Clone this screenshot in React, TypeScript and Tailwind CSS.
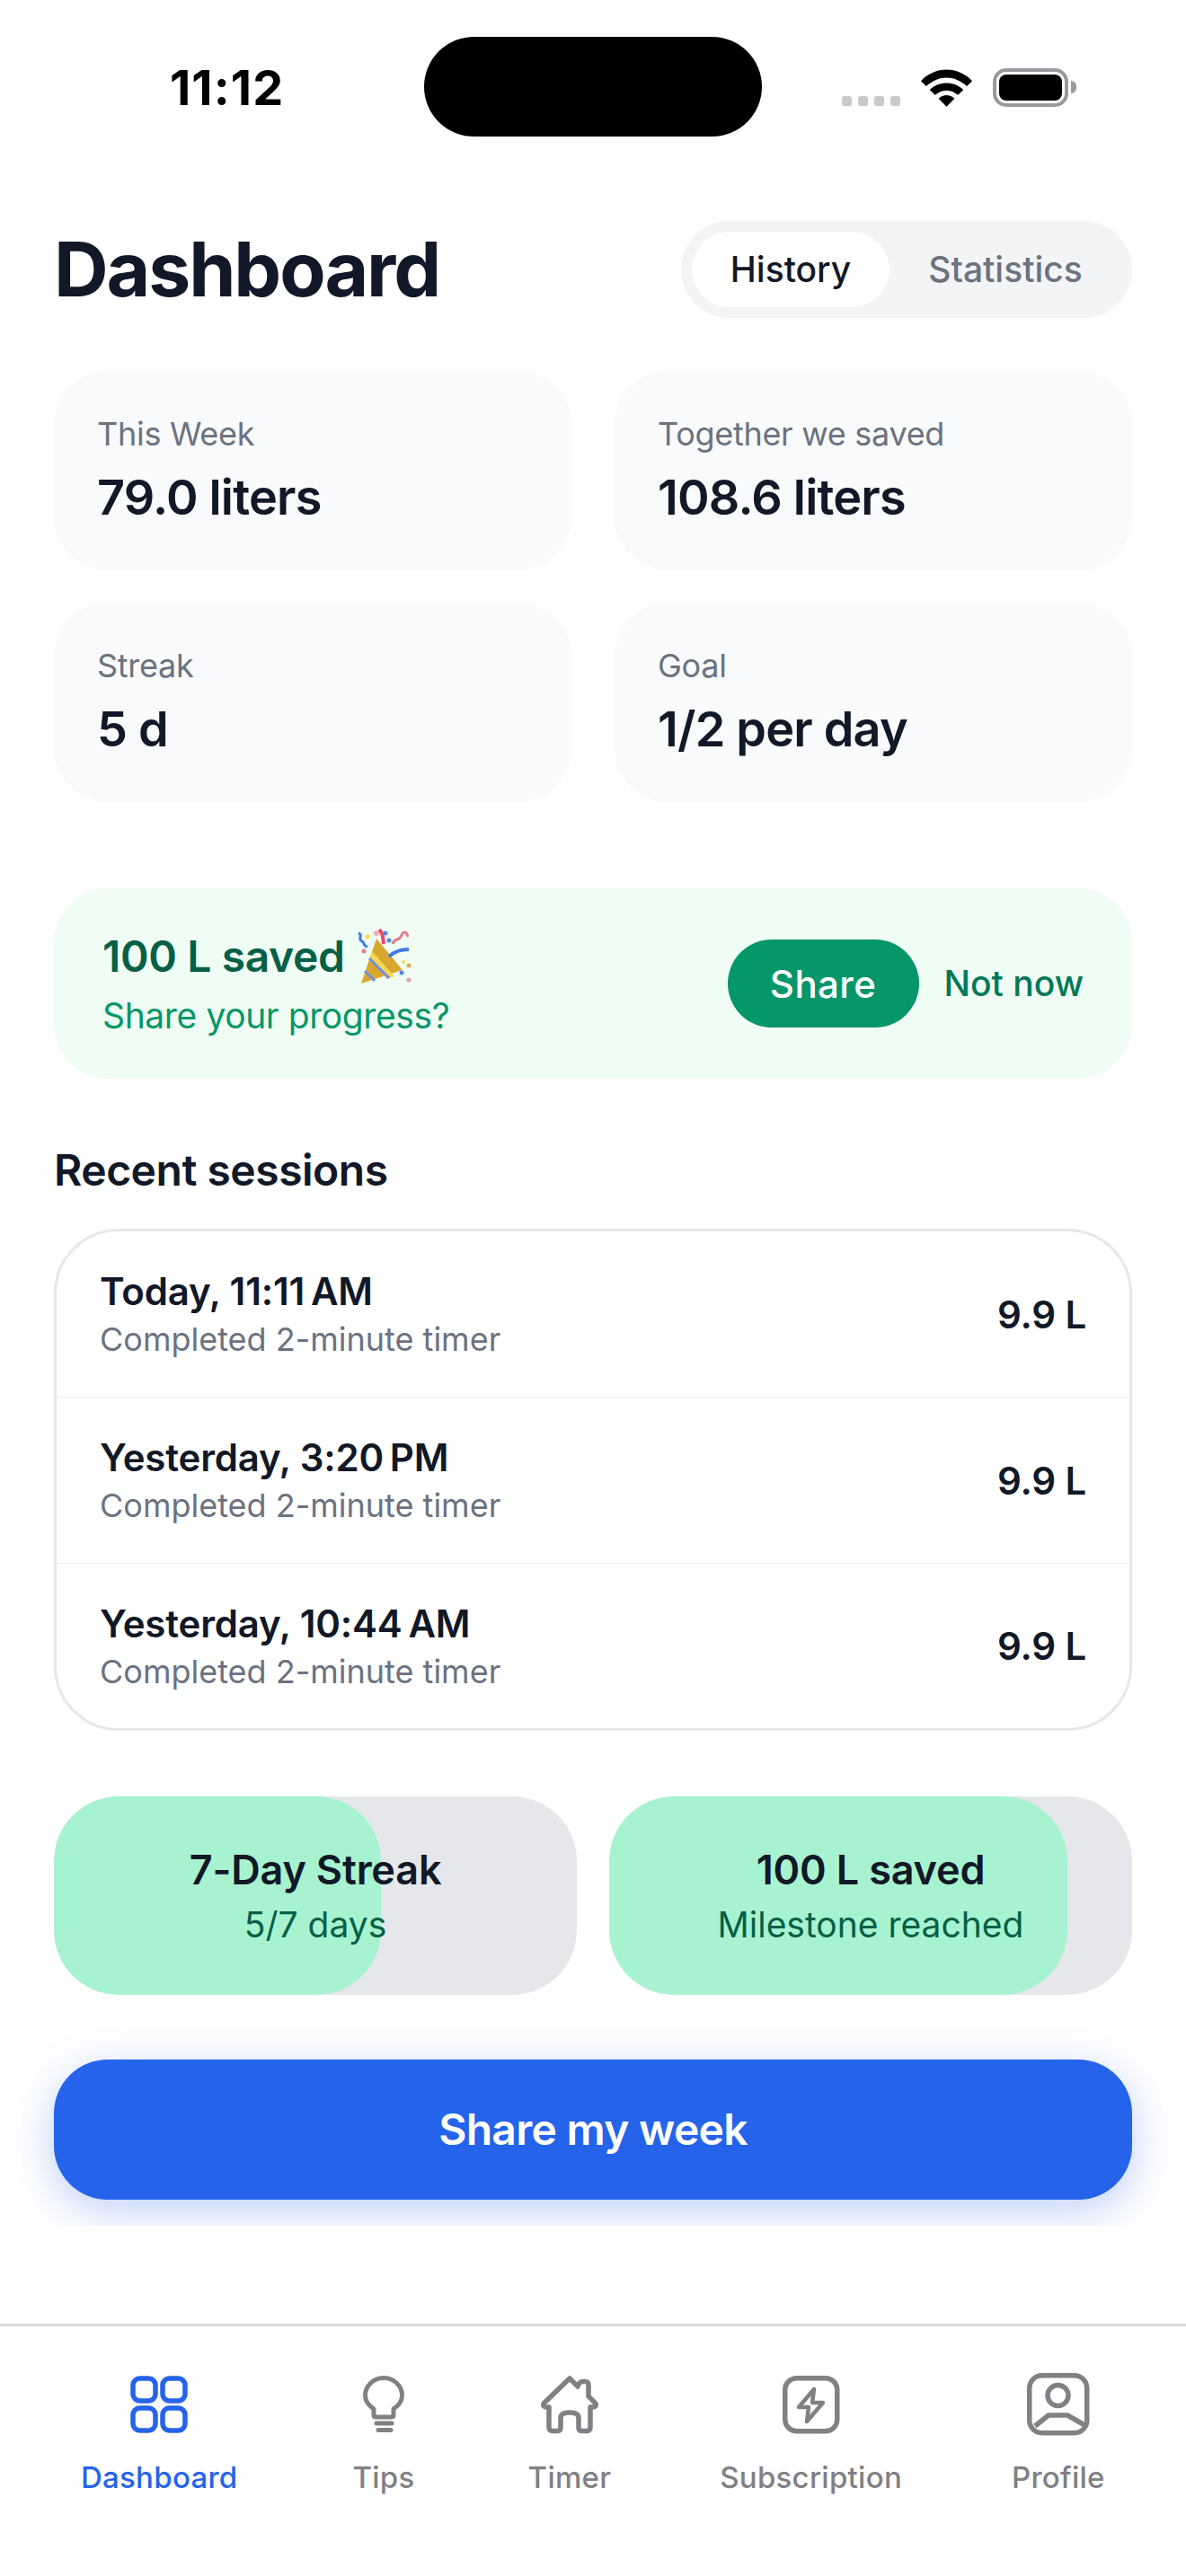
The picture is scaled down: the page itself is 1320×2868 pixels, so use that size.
const PartyPopper = () => (
  <svg width="64" height="64" viewBox="0 0 64 64" className="shrink-0">
    <path d="M24 12 L53 47 L7 62 Z" fill="#d9a630" />
    <path d="M19 26 L44 54 L36 57 L16 34 Z" fill="#f7d750" />
    <path d="M16 34 L38 56" stroke="#6f8fe0" strokeWidth="3" fill="none" />
    <path d="M11 48 L22 59" stroke="#6f8fe0" strokeWidth="3" fill="none" />
    <path d="M4 6 C10 8 2 12 8 15 C12 17 8 20 14 21" stroke="#3f7be8" strokeWidth="3" fill="none" />
    <path d="M27 2 C32 6 31 12 32 18" stroke="#ea4a6a" strokeWidth="4" fill="none" />
    <path d="M42 18 C44 10 50 16 52 8 C54 2 60 6 58 10" stroke="#e8798c" strokeWidth="3" fill="none" />
    <path d="M38 32 C44 26 52 24 60 24" stroke="#3f7be8" strokeWidth="4" fill="none" />
    <circle cx="14" cy="10" r="2.5" fill="#f7d750" />
    <circle cx="24" cy="6" r="3" fill="#e9b0b0" />
    <circle cx="34" cy="6" r="2.5" fill="#4f86ea" />
    <circle cx="10" cy="26" r="2.5" fill="#e8798c" />
    <circle cx="38" cy="14" r="2.5" fill="#4f86ea" />
    <circle cx="60" cy="42" r="2.5" fill="#e0ab3a" />
    <circle cx="54" cy="38" r="2" fill="#f7d750" />
    <circle cx="52" cy="50" r="2.5" fill="#4f86ea" />
    <circle cx="60" cy="58" r="2.5" fill="#e8a0a0" />
  </svg>
);

const Stat = ({ label, value }: { label: string; value: string }) => (
  <div className="h-[222px] rounded-[60px] bg-[#f9fafb] pl-12 pt-[46px]">
    <p className="text-[36px] leading-[48px] tracking-[-0.008em] text-[#6b7280]">{label}</p>
    <p className="mt-[11px] text-[54px] leading-[72px] font-semibold tracking-[-0.015em] text-[#111827]">{value}</p>
  </div>
);

const Session = ({ title, last }: { title: string; last?: boolean }) => (
  <div className={`flex items-center justify-between px-[48px] ${last ? 'h-[183px]' : 'h-[185px] border-b-[1.5px] border-[#eceef0]'}`}>
    <div>
      <p className="text-[42px] leading-[54px] font-semibold tracking-[-0.004em] text-[#111827]">{title}</p>
      <p className="mt-[2px] text-[36px] leading-[48px] text-[#6b7280]">Completed 2-minute timer</p>
    </div>
    <p className="text-[42px] font-semibold tracking-[-0.004em] text-[#111827]">9.9 L</p>
  </div>
);

const Badge = ({ title, sub, fill }: { title: string; sub: string; fill: string }) => (
  <div className="relative h-[221px] flex-1 overflow-hidden rounded-[72px] bg-[#e5e7eb]">
    <div className={`absolute inset-y-0 left-0 rounded-[72px] bg-[#a7f3d0] ${fill}`} />
    <div className="relative flex h-full flex-col items-center justify-center">
      <p className="text-[45px] leading-[60px] font-semibold tracking-[-0.004em] text-[#111827]">{title}</p>
      <p className="mt-1 text-[39px] leading-[54px] text-[#065f46]">{sub}</p>
    </div>
  </div>
);

const DashboardIcon = () => (
  <svg width="64" height="64" viewBox="0 0 64 64" fill="none" stroke="currentColor" strokeWidth="5.5">
    <rect x="3" y="3" width="25" height="25" rx="7.5" />
    <rect x="36" y="3" width="25" height="25" rx="7.5" />
    <rect x="3" y="36" width="25" height="25" rx="7.5" />
    <rect x="36" y="36" width="25" height="25" rx="7.5" />
  </svg>
);

const BulbIcon = () => (
  <svg width="48" height="64" viewBox="0 0 48 64" fill="none" stroke="currentColor" strokeWidth="5" strokeLinecap="round" strokeLinejoin="round">
    <path d="M13 44 V37 C7 33 3.5 28 3.5 22 A20.5 19.5 0 1 1 44.5 22 C44.5 28 41 33 35 37 V44 Q35 46 32 46 H16 Q13 46 13 44 Z" />
    <path d="M16 53 H33 M18 60.5 H32" />
  </svg>
);

const HomeIcon = () => (
  <svg width="68" height="68" viewBox="0 0 68 68" fill="none" stroke="currentColor" strokeWidth="5.5" strokeLinejoin="round">
    <path d="M34 5 L43 14 C44 10 46 8.5 49 8.5 H51 C54 8.5 55 10 55 13 V25 L62 32 C64.5 34.5 63 37 60 37 H57 V59 C57 62 55.5 63.5 53 63.5 H47 C45 63.5 44 62 44 60 V49 C44 45 41 43 34 43 C27 43 24 45 24 49 V60 C24 62 23 63.5 21 63.5 H15 C12.5 63.5 11 62 11 59 V37 H8 C5 37 3.5 34.5 6 32 Z" />
  </svg>
);

const BoltIcon = () => (
  <svg width="68" height="68" viewBox="0 0 68 68" fill="none" stroke="currentColor" strokeWidth="5.5" strokeLinejoin="round">
    <rect x="4.75" y="4.75" width="58" height="59" rx="13" />
    <path d="M37 17 L20 37 H31 L29 53 L47 32 H35 Z" strokeWidth="4.5" />
  </svg>
);

const ProfileIcon = () => (
  <svg width="72" height="72" viewBox="0 0 72 72" fill="none" stroke="currentColor" strokeWidth="5.5" strokeLinejoin="round">
    <rect x="3.75" y="3.75" width="64" height="64" rx="14" />
    <circle cx="35.5" cy="26" r="11.5" />
    <path d="M10 60 L25 48 H46 L67 60" />
  </svg>
);

const tabs = [
  { label: 'Dashboard', icon: <DashboardIcon />, space: '', active: true },
  { label: 'Tips', icon: <BulbIcon />, space: 'ml-[128px]' },
  { label: 'Timer', icon: <HomeIcon />, space: 'ml-[126px]' },
  { label: 'Subscription', icon: <BoltIcon />, space: 'ml-[121px]' },
  { label: 'Profile', icon: <ProfileIcon />, space: 'ml-[122px]' },
];

export default function App() {
  return (
    <div className="flex h-[2868px] w-[1320px] flex-col overflow-hidden bg-white font-['Inter',sans-serif]">
      <div className="relative flex h-[194px] shrink-0 items-center justify-between pl-[189px] pr-[122px]">
        <span className="text-[54px] font-bold tracking-[0.02em] text-black">11:12</span>
        <div className="absolute left-[472px] top-[41px] h-[111px] w-[376px] rounded-full bg-black" />
        <div className="flex items-end gap-[23px]">
          <div className="flex gap-[7px] pb-[1px]">
            <span className="size-[11px] rounded-[3px] bg-[#c8c9cb]" />
            <span className="size-[11px] rounded-[3px] bg-[#c8c9cb]" />
            <span className="size-[11px] rounded-[3px] bg-[#c8c9cb]" />
            <span className="size-[11px] rounded-[3px] bg-[#c8c9cb]" />
          </div>
          <svg width="57" height="42" viewBox="0 0 58 42">
            <path d="M0 13 C16 -4 42 -4 58 13 L52 19 C38 6 20 6 6 19 Z M10 23 C20 13 38 13 48 23 L42 29 C34 22 24 22 16 29 Z M20 33 C25 28 33 28 38 33 L29 42 Z" fill="#000" />
          </svg>
          <div className="flex items-center gap-[3px]">
            <div className="flex h-[43px] w-[84px] rounded-[15px] border-[4px] border-[#98989f] p-[3px]">
              <div className="size-full rounded-[8px] bg-black" />
            </div>
            <div className="h-[14px] w-[6px] rounded-r-full bg-[#98989f]" />
          </div>
        </div>
      </div>

      <main className="h-[2284px] shrink-0 overflow-hidden px-[60px]">
        <div className="flex items-center justify-between pt-[52px]">
          <h1 className="text-[84px] leading-[108px] font-bold tracking-[-0.025em] text-[#111827]">Dashboard</h1>
          <div className="flex h-[108px] w-[502px] items-center rounded-full bg-[#f3f4f6] p-3">
            <div className="flex h-[84px] w-[220px] items-center justify-center rounded-full bg-white text-[39px] font-medium text-[#111827]">History</div>
            <div className="flex-1 text-center text-[39px] font-medium text-[#6b7280]">Statistics</div>
          </div>
        </div>

        <div className="mt-[59px] grid grid-cols-2 gap-x-12 gap-y-9">
          <Stat label="This Week" value="79.0 liters" />
          <Stat label="Together we saved" value="108.6 liters" />
          <Stat label="Streak" value="5 d" />
          <Stat label="Goal" value="1/2 per day" />
        </div>

        <div className="mt-24 flex h-[212px] items-center justify-between rounded-[60px] bg-[#f0fdf4] pl-[54px] pr-[54px]">
          <div>
            <div className="flex items-center gap-[12px]">
              <p className="text-[48px] leading-[60px] font-semibold tracking-[-0.008em] text-[#065f46]">100 L saved</p>
              <PartyPopper />
            </div>
            <p className="mt-[7px] text-[39px] leading-[54px] tracking-[-0.01em] text-[#059669]">Share your progress?</p>
          </div>
          <div className="flex items-center gap-[28px]">
            <div className="flex h-[98px] w-[213px] items-center justify-center rounded-full bg-[#059669] text-[42px] font-medium tracking-[0.01em] text-white">Share</div>
            <span className="text-[39px] font-medium text-[#047857]">Not now</span>
          </div>
        </div>

        <h2 className="mt-[72px] text-[48px] leading-[60px] font-semibold tracking-[-0.01em] text-[#111827]">Recent sessions</h2>
        <div className="mt-[35px] rounded-[72px] border-[3px] border-[#e5e7eb]">
          <Session title={'Today, 11:11\u202fAM'} />
          <Session title={'Yesterday, 3:20\u202fPM'} />
          <Session title={'Yesterday, 10:44\u202fAM'} last />
        </div>

        <div className="mt-[73px] flex gap-9">
          <Badge title="7-Day Streak" sub="5/7 days" fill="w-[364px]" />
          <Badge title="100 L saved" sub="Milestone reached" fill="w-[510px]" />
        </div>

        <div className="mt-[72px] flex h-[156px] items-center justify-center rounded-[60px] bg-[#2563eb] text-[48px] font-semibold tracking-[-0.015em] text-white shadow-[0_12px_48px_rgba(37,99,235,0.3)]">
          Share my week
        </div>
      </main>

      <nav className="mt-auto flex h-[281px] shrink-0 border-t-[3px] border-[#d9d9d9] pl-[90px] pt-[51px]">
        {tabs.map((t) => (
          <div key={t.label} className={`flex flex-col items-center gap-[24px] ${t.space} ${t.active ? 'text-[#2563eb]' : 'text-[#808085]'}`}>
            <div className="flex h-[72px] items-center justify-center">{t.icon}</div>
            <span className="text-[33px] leading-[42px] font-medium tracking-[0.008em]">{t.label}</span>
          </div>
        ))}
      </nav>
    </div>
  );
}
